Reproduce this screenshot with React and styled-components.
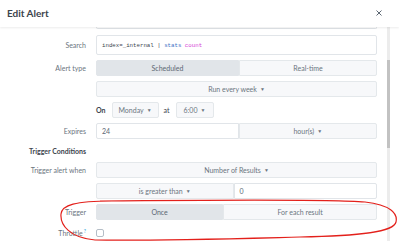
import styled, { createGlobalStyle } from "styled-components";

const Global = createGlobalStyle`
  html, body {
    margin: 0;
    padding: 0;
    background: #fff;
  }
  body {
    font-family: Lato, "Liberation Sans", sans-serif;
    color: #5c6773;
  }
`;

const Modal = styled.div`
  position: relative;
  width: 399px;
  height: 241px;
  overflow: hidden;
  background: #fff;
`;

const Header = styled.div`
  position: relative;
  z-index: 1;
  height: 27px;
  display: flex;
  align-items: center;
  justify-content: space-between;
  padding: 0 17px 2px 7px;
  box-sizing: border-box;
  background: #fff;
  box-shadow: 0 1px 2px rgba(0, 0, 0, 0.08);
`;

const Title = styled.h1`
  margin: 0;
  font-size: 10px;
  font-weight: 700;
  color: #3c444d;
`;

const Body = styled.div`
  display: flex;
  height: 214px;
`;

const Content = styled.div`
  width: 386px;
  padding-right: 9px;
  box-sizing: border-box;
`;

const Scrollbar = styled.div`
  width: 3px;
  margin-left: 1px;
  background: #ececec;
`;

const Thumb = styled.div`
  margin-top: 33px;
  height: 88px;
  background: #c2c2c2;
`;

const Row = styled.div`
  display: flex;
  align-items: center;
  height: ${({ h }) => h || 16}px;
  margin-bottom: 5px;
`;

const Label = styled.div`
  width: 86px;
  padding-right: 10px;
  flex-shrink: 0;
  text-align: right;
  font-size: 7px;
  color: #6b7580;
  white-space: nowrap;
`;

const Heading = styled(Label)`
  font-weight: 700;
  color: #3c444d;
`;

const Controls = styled.div`
  width: 281px;
  height: 100%;
  display: flex;
  align-items: center;
`;

const Tail = styled.div`
  margin: 0 0 6px 96px;
  width: 281px;
  height: 2px;
  box-sizing: border-box;
  border: 1px solid #dfe3e7;
  border-top: none;
  border-radius: 0 0 2px 2px;
`;

const Input = styled.div`
  flex: ${({ grow }) => grow || 1};
  height: 100%;
  box-sizing: border-box;
  display: flex;
  align-items: center;
  padding-left: 5px;
  background: #fff;
  border: 1px solid #e1e5e9;
  border-radius: 2px;
  font-size: 7px;
  color: #5c6773;
`;

const Code = styled.span`
  font-family: "Liberation Mono", monospace;
  font-size: 5.75px;
  color: ${({ c }) => c || "#3c444d"};
  white-space: pre;
`;

const Button = styled.div`
  flex: ${({ grow }) => grow || 1};
  height: 100%;
  box-sizing: border-box;
  display: flex;
  align-items: center;
  justify-content: center;
  background: ${({ active }) => (active ? "#e1e5e9" : "#f7f8fa")};
  border: 1px solid ${({ active }) => (active ? "#e1e5e9" : "#e4e8eb")};
  border-radius: 2px;
  font-size: 7px;
  color: ${({ active }) => (active ? "#5c6773" : "#6b7580")};
  white-space: nowrap;
`;

const Group = styled.div`
  display: flex;
  width: 100%;
  height: 100%;

  & > * + * {
    border-top-left-radius: 0;
    border-bottom-left-radius: 0;
  }
  & > *:not(:last-child) {
    border-top-right-radius: 0;
    border-bottom-right-radius: 0;
  }
`;

const Small = styled(Button)`
  flex: none;
  width: ${({ w }) => w}px;
`;

const Word = styled.span`
  font-size: 7px;
  font-weight: ${({ bold }) => (bold ? 700 : 400)};
  color: #3c444d;
  margin: 0 ${({ mr }) => mr || 0}px 0 ${({ ml }) => ml || 0}px;
`;

const Caret = styled.span`
  font-size: 5px;
  margin-left: 3px;
`;

const Help = styled.sup`
  font-size: 5px;
  color: #1a9cd6;
  margin-left: 1px;
`;

const Check = styled.div`
  width: 8px;
  height: 8px;
  box-sizing: border-box;
  border: 1px solid #b5bec7;
  border-radius: 2px;
  background: #fff;
`;

const Annotation = styled.svg`
  position: absolute;
  left: 0;
  top: 0;
  pointer-events: none;
`;

const Close = () => (
  <svg width="6" height="6" viewBox="0 0 6 6">
    <path d="M0.5 0.5 L5.5 5.5 M5.5 0.5 L0.5 5.5" stroke="#5c6773" strokeWidth="1" />
  </svg>
);

const App = () => {
  return (
    <Modal>
      <Global />
      <Header>
        <Title>Edit Alert</Title>
        <Close />
      </Header>
      <Body>
        <Content>
          <Tail />
          <Row h={20}>
            <Label>Search</Label>
            <Controls>
              <Input>
                <Code>index=_internal | </Code>
                <Code c="#3b6fc4">stats</Code>
                <Code> </Code>
                <Code c="#d63fd6">count</Code>
              </Input>
            </Controls>
          </Row>
          <Row>
            <Label>Alert type</Label>
            <Controls>
              <Group>
                <Button active grow={143}>Scheduled</Button>
                <Button grow={138}>Real-time</Button>
              </Group>
            </Controls>
          </Row>
          <Row>
            <Label />
            <Controls>
              <Button>
                Run every week<Caret>▼</Caret>
              </Button>
            </Controls>
          </Row>
          <Row>
            <Label />
            <Controls>
              <Word bold mr={6}>On</Word>
              <Small w={47}>
                Monday<Caret>▼</Caret>
              </Small>
              <Word ml={5} mr={6}>at</Word>
              <Small w={38}>
                6:00<Caret>▼</Caret>
              </Small>
            </Controls>
          </Row>
          <Row>
            <Label>Expires</Label>
            <Controls>
              <Group>
                <Input grow={140}>24</Input>
                <Button grow={141}>
                  hour(s)<Caret>▼</Caret>
                </Button>
              </Group>
            </Controls>
          </Row>
          <Row h={13}>
            <Heading>Trigger Conditions</Heading>
          </Row>
          <Row>
            <Label>Trigger alert when</Label>
            <Controls>
              <Button>
                Number of Results<Caret>▼</Caret>
              </Button>
            </Controls>
          </Row>
          <Row>
            <Label />
            <Controls>
              <Group>
                <Button grow={140}>
                  is greater than<Caret>▼</Caret>
                </Button>
                <Input grow={141}>0</Input>
              </Group>
            </Controls>
          </Row>
          <Row>
            <Label>Trigger</Label>
            <Controls>
              <Group>
                <Button active grow={127}>Once</Button>
                <Button grow={154}>For each result</Button>
              </Group>
            </Controls>
          </Row>
          <Row>
            <Label>
              Throttle<Help>?</Help>
            </Label>
            <Controls>
              <Check />
            </Controls>
          </Row>
        </Content>
        <Scrollbar>
          <Thumb />
        </Scrollbar>
      </Body>
      <Annotation width="399" height="241" viewBox="0 0 399 241">
        <path
          d="M100 201 C200 200, 330 199, 365 202 C390 205, 398 213, 396 222 C394 232, 360 236, 300 237 C220 239, 150 241, 95 240 C70 238, 60 225, 61 214 C62 205, 75 201, 112 201"
          fill="none"
          stroke="#e3201b"
          strokeWidth="1.2"
        />
      </Annotation>
    </Modal>
  );
};

export default App;
